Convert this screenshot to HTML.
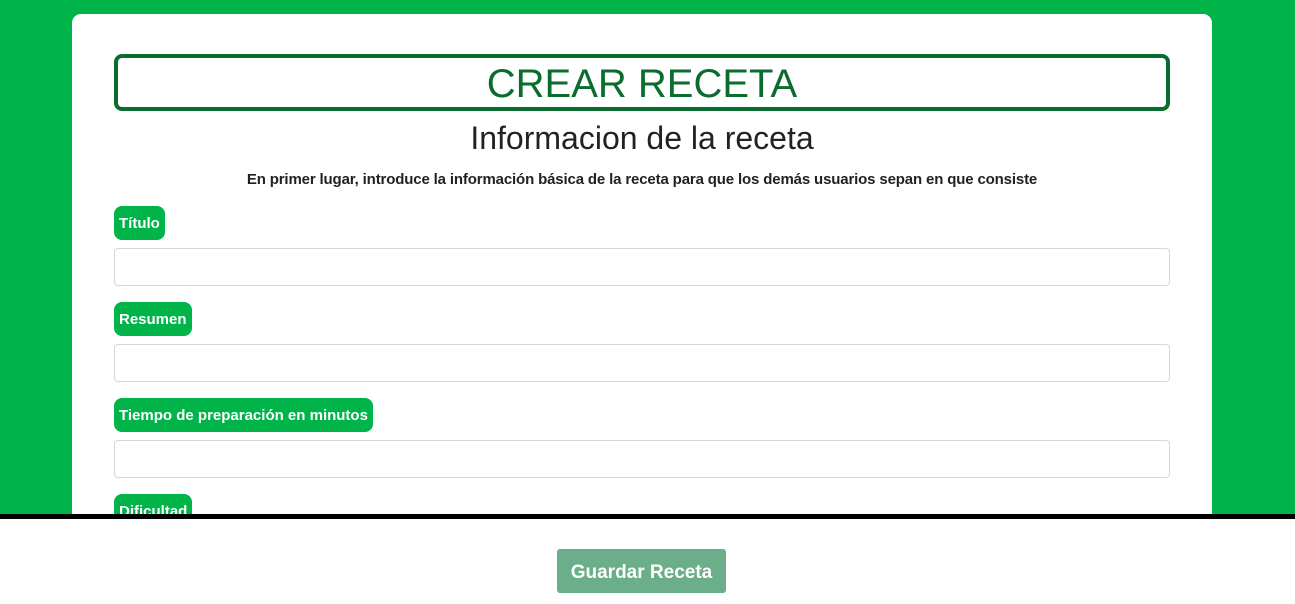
<!DOCTYPE html>
<html><head><style>
body{margin:0;width:1295px;height:604px;overflow:hidden;background:#00b44a;font-family:"Liberation Sans",Arial,sans-serif;position:relative}
.card{position:absolute;left:72px;top:14px;width:1140px;height:520px;background:#fff;border-radius:9px}
.title{position:absolute;left:42px;top:40px;width:1048px;height:49px;border:4px solid #0a6c2e;border-radius:8px;text-align:center;color:#0a6c2e;font-size:40px;line-height:52px}
.h2{position:absolute;left:0;width:1140px;top:106px;text-align:center;font-size:32px;color:#222;line-height:36px}
.p{position:absolute;left:0;width:1140px;top:157px;text-align:center;font-size:15px;font-weight:bold;color:#222;letter-spacing:-0.01em}
.lab{position:absolute;left:42px;background:#00b44a;color:#fff;font-weight:bold;font-size:15px;border-radius:8px;padding:0 5px;height:34px;line-height:36px;overflow:hidden}
.in{position:absolute;left:42px;width:1054px;height:36px;border:1px solid #d6d6d6;border-radius:4px}
.bar{position:absolute;left:0;top:514px;width:1295px;height:5px;background:#000}
.foot{position:absolute;left:0;top:519px;width:1295px;height:85px;background:#fff}
.btn{position:absolute;left:557px;top:549px;width:169px;height:44px;background:#6aae8a;border-radius:3px;color:#fff;font-size:19px;font-weight:bold;text-align:center;line-height:47px}
</style></head><body>
<div class="card">
<div class="title">CREAR RECETA</div>
<div class="h2">Informacion de la receta</div>
<div class="p">En primer lugar, introduce la información básica de la receta para que los demás usuarios sepan en que consiste</div>
<div class="lab" style="top:192px">Título</div>
<div class="in" style="top:234px"></div>
<div class="lab" style="top:288px">Resumen</div>
<div class="in" style="top:330px"></div>
<div class="lab" style="top:384px">Tiempo de preparación en minutos</div>
<div class="in" style="top:426px"></div>
<div class="lab" style="top:480px">Dificultad</div>
</div>
<div class="bar"></div>
<div class="foot"></div>
<div class="btn">Guardar Receta</div>
</body></html>
